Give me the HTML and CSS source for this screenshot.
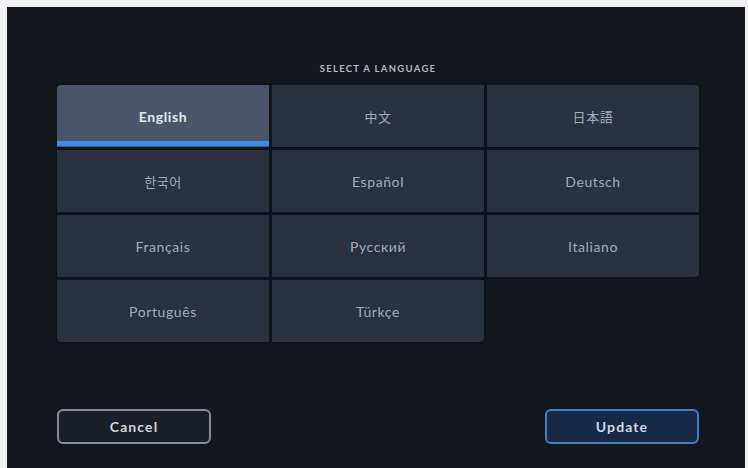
FILE: index.html
```html
<!DOCTYPE html>
<html lang="en">
<head>
<meta charset="utf-8">
<title>Select a Language</title>
<link rel="stylesheet" href="styles.css">
</head>
<body>
<div class="panel">
  <div class="title">SELECT A LANGUAGE</div>
  <div class="grid">
    <div class="cell selected">English</div>
    <div class="cell" lang="zh-CN">中文</div>
    <div class="cell" lang="ja">日本語</div>
    <div class="cell" lang="ko">한국어</div>
    <div class="cell">Español</div>
    <div class="cell">Deutsch</div>
    <div class="cell">Français</div>
    <div class="cell">Русский</div>
    <div class="cell">Italiano</div>
    <div class="cell">Português</div>
    <div class="cell">Türkçe</div>
  </div>
  <div class="footer">
    <button class="btn cancel">Cancel</button>
    <button class="btn update">Update</button>
  </div>
</div>
</body>
</html>
```

FILE: styles.css
```css
html, body {
  margin: 0;
  padding: 0;
  background: #f1f1f1;
  overflow: hidden;
}
body {
  width: 748px;
  height: 468px;
  font-family: Lato, "Noto Sans", sans-serif;
}
.panel {
  margin: 7px 0 0 7px;
  width: 738px;
  height: 461px;
  background: #13161d;
  box-sizing: border-box;
  padding: 56px 0 0 50px;
}
.title {
  width: 642px;
  text-align: center;
  font-size: 9.5px;
  line-height: 12px;
  font-weight: 700;
  letter-spacing: 1.3px;
  color: #b4b9c3;
  margin-bottom: 10px;
}
.grid {
  display: grid;
  grid-template-columns: repeat(3, 212px);
  grid-auto-rows: 62px;
  gap: 3px;
  width: 642px;
}
.cell {
  position: relative;
  display: flex;
  align-items: center;
  justify-content: center;
  background: #2a3141;
  color: #a3abba;
  font-size: 14px;
  letter-spacing: 0.6px;
  box-shadow: 0 0 0 1.5px #0f131b;
}
.cell:nth-child(1) { border-top-left-radius: 4px; }
.cell:nth-child(3) { border-top-right-radius: 4px; }
.cell:nth-child(9) { border-bottom-right-radius: 4px; }
.cell:nth-child(10) { border-bottom-left-radius: 4px; }
.cell:nth-child(11) { border-bottom-right-radius: 4px; }
.cell[lang="zh-CN"] { font-family: Lato, "Noto Sans CJK SC", sans-serif; font-size: 13px; }
.cell[lang="ja"] { font-family: Lato, "Noto Sans CJK JP", sans-serif; font-size: 13px; }
.cell[lang="ko"] { font-family: Lato, "Noto Sans CJK KR", sans-serif; font-size: 13px; }
.cell.selected {
  background: #4a5569;
  color: #e3e6ec;
  font-weight: 700;
}
.cell.selected::after {
  content: "";
  position: absolute;
  left: 0;
  right: 0;
  bottom: 1px;
  height: 5px;
  background: #3b8fe9;
}
.footer {
  display: flex;
  justify-content: space-between;
  width: 642px;
  margin-top: 67px;
}
.btn {
  width: 154px;
  height: 35px;
  border-radius: 6px;
  font-family: Lato, "Noto Sans", sans-serif;
  font-size: 14px;
  font-weight: 700;
  letter-spacing: 1.1px;
  color: #d2d6dd;
  padding: 0;
  box-sizing: border-box;
}
.cancel {
  background: #1b1f29;
  border: 2px solid #878d98;
}
.update {
  background: #162947;
  border: 2px solid #4a7ec2;
}
```
